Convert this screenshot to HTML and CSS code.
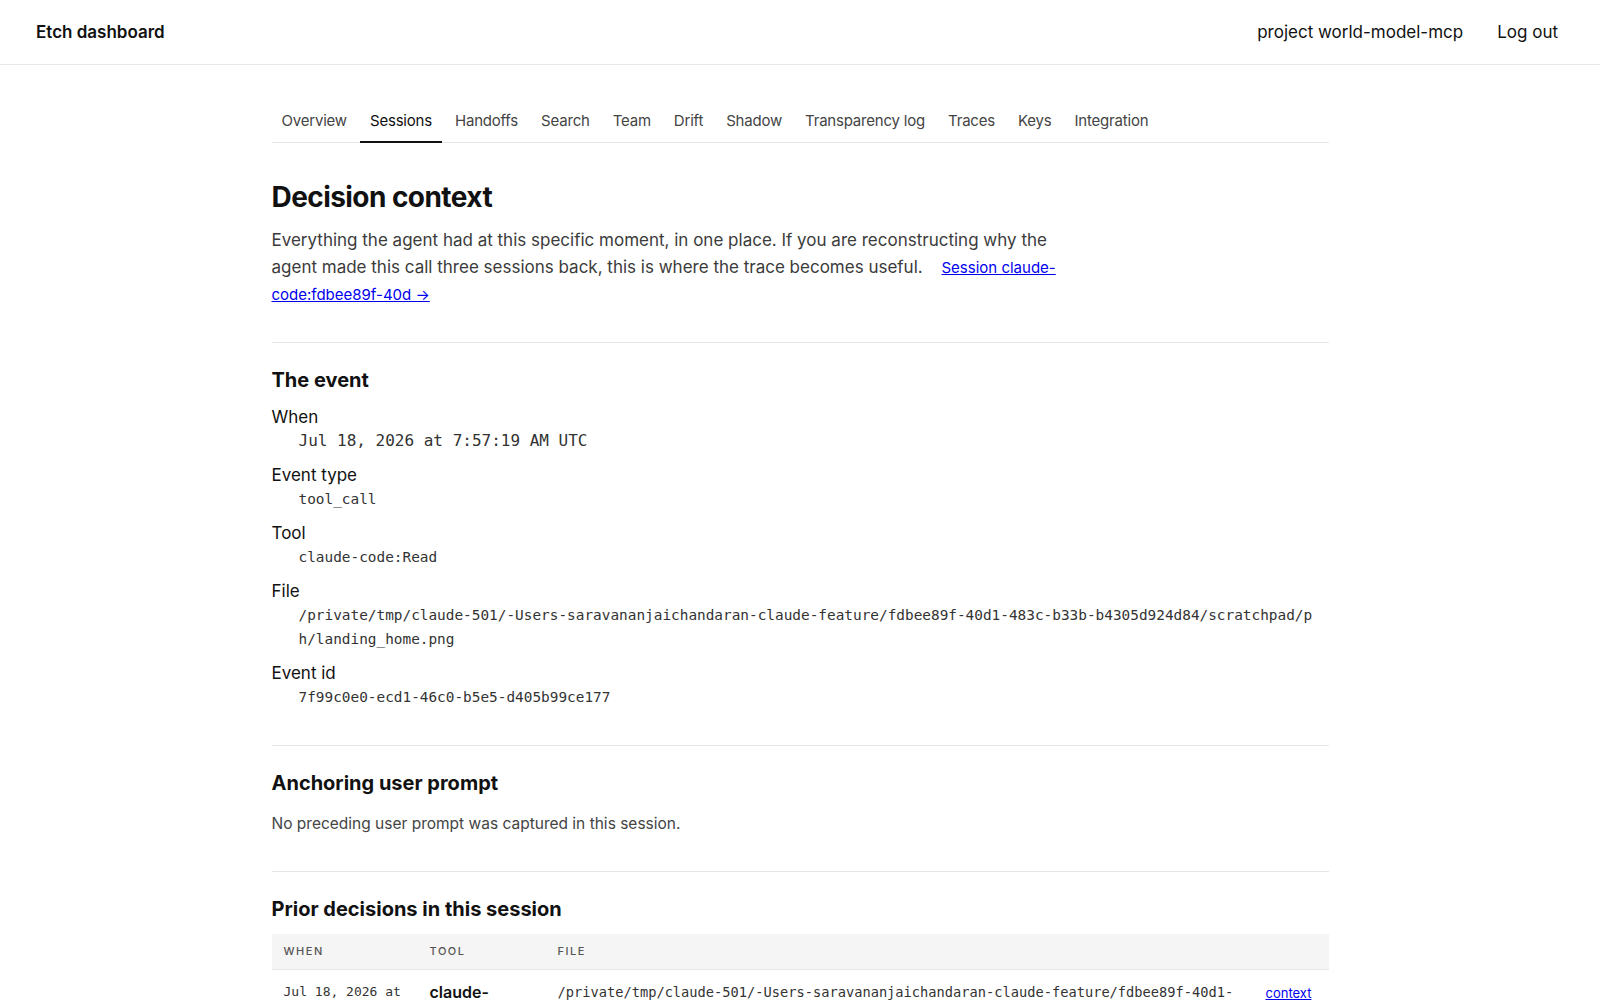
FILE: index.html
```html
<!DOCTYPE html>
<html>
<head>
	<title>Decision context - Etch dashboard</title>
	<link rel="stylesheet" href="styles.css">
</head>
<body>
	<header class="topbar">
		<div class="brand">Etch dashboard</div>
		<nav class="account">
			<span class="project">project world-model-mcp</span>
			<a class="logout" href="#">Log out</a>
		</nav>
	</header>

	<main class="page">
		<nav class="tabs">
			<a href="#">Overview</a>
			<a href="#" class="active">Sessions</a>
			<a href="#">Handoffs</a>
			<a href="#">Search</a>
			<a href="#">Team</a>
			<a href="#">Drift</a>
			<a href="#">Shadow</a>
			<a href="#">Transparency log</a>
			<a href="#">Traces</a>
			<a href="#">Keys</a>
			<a href="#">Integration</a>
		</nav>

		<section class="intro">
			<h1>Decision context</h1>
			<p>Everything the agent had at this specific moment, in one place. If you are reconstructing why the agent made this call three sessions back, this is where the trace becomes useful. <a class="session-link" href="#">Session claude-code:fdbee89f-40d &rarr;</a></p>
		</section>

		<section class="block">
			<h2>The event</h2>
			<dl class="facts">
				<dt>When</dt>
				<dd class="big">Jul 18, 2026 at 7:57:19 AM UTC</dd>
				<dt>Event type</dt>
				<dd>tool_call</dd>
				<dt>Tool</dt>
				<dd>claude-code:Read</dd>
				<dt>File</dt>
				<dd>/private/tmp/claude-501/-Users-saravananjaichandaran-claude-feature/fdbee89f-40d1-483c-b33b-b4305d924d84/scratchpad/ph/landing_home.png</dd>
				<dt>Event id</dt>
				<dd>7f99c0e0-ecd1-46c0-b5e5-d405b99ce177</dd>
			</dl>
		</section>

		<section class="block">
			<h2>Anchoring user prompt</h2>
			<p class="muted">No preceding user prompt was captured in this session.</p>
		</section>

		<section class="block">
			<h2>Prior decisions in this session</h2>
			<table class="decisions">
				<colgroup>
					<col class="col-when">
					<col class="col-tool">
					<col>
					<col class="col-link">
				</colgroup>
				<thead>
					<tr>
						<th>When</th>
						<th>Tool</th>
						<th>File</th>
						<th></th>
					</tr>
				</thead>
				<tbody>
					<tr>
						<td class="when">Jul 18, 2026 at 7:56:48 AM</td>
						<td class="tool">claude-code:Read</td>
						<td class="file">/private/tmp/claude-501/-Users-saravananjaichandaran-claude-feature/fdbee89f-40d1-483c-b33b-b4305d924d84/scratchpad/ph/landing_about.png</td>
						<td class="ctx"><a href="#">context</a></td>
					</tr>
					<tr>
						<td class="when">Jul 18, 2026 at 7:56:12 AM</td>
						<td class="tool">claude-code:Edit</td>
						<td class="file">/private/tmp/claude-501/-Users-saravananjaichandaran-claude-feature/fdbee89f-40d1-483c-b33b-b4305d924d84/scratchpad/ph/index.html</td>
						<td class="ctx"><a href="#">context</a></td>
					</tr>
				</tbody>
			</table>
		</section>
	</main>
</body>
</html>
```

FILE: styles.css
```css
body {
	margin: 0;
	font-family: Inter, "Noto Sans", sans-serif;
	color: #111;
	background: #fff;
}

/* barra do topo */
.topbar {
	height: 65px;
	box-sizing: border-box;
	display: flex;
	align-items: center;
	justify-content: space-between;
	padding: 0 36px;
	border-bottom: 1px solid #e8e8e8;
}
.brand {
	font-size: 17px;
	font-weight: 600;
}
.account {
	display: flex;
	align-items: center;
	gap: 28px;
	font-size: 17px;
}
.logout {
	color: #111;
	text-decoration: none;
	padding: 4px 6px;
}

/* conteudo */
.page {
	max-width: 1057px;
	margin: 0 auto;
	padding-bottom: 48px;
}

.tabs {
	display: flex;
	gap: 3px;
	margin-top: 35px;
	border-bottom: 1px solid #e6e6e6;
}
.tabs a {
	padding: 10px 10px 9px;
	font-size: 15px;
	line-height: 22px;
	letter-spacing: -0.2px;
	color: #444;
	text-decoration: none;
	border-bottom: 2px solid transparent;
	margin-bottom: -1px;
}
.tabs a.active {
	color: #111;
	border-bottom-color: #111;
}

.intro h1 {
	font-size: 28px;
	line-height: 34px;
	font-weight: 700;
	letter-spacing: -0.02em;
	margin: 37px 0 13px;
}
.intro p {
	max-width: 792px;
	font-size: 17px;
	line-height: 26.5px;
	color: #3b3b3b;
	margin: 0 0 33px;
}
.session-link {
	font-size: 15px;
	margin-left: 14px;
	color: #0000ee;
}

.block {
	border-top: 1px solid #e6e6e6;
	padding: 24px 0 26px;
}
.block h2 {
	font-size: 20px;
	line-height: 26px;
	font-weight: 700;
	margin: 0 0 12px;
}
.muted {
	font-size: 15.5px;
	line-height: 24px;
	color: #444;
	margin: 16px 0 9px;
}

.facts {
	margin: 0;
}
.facts dt {
	font-size: 17px;
	line-height: 24px;
}
.facts dd {
	margin: 0 12px 10px 27px;
	font-family: "DejaVu Sans Mono", "Liberation Mono", monospace;
	font-size: 14.4px;
	line-height: 24px;
	color: #333;
	word-break: break-all;
}
.facts dd.big {
	font-size: 16px;
}

/* tabela de decisoes */
.decisions {
	width: 100%;
	border-collapse: collapse;
	table-layout: fixed;
}
.col-when {
	width: 146px;
}
.col-tool {
	width: 128px;
}
.col-link {
	width: 75px;
}
.decisions th {
	background: #f5f5f5;
	text-align: left;
	font-size: 11px;
	font-weight: 500;
	letter-spacing: 0.14em;
	text-transform: uppercase;
	color: #555;
	line-height: 15px;
	padding: 10px 12px;
	border-bottom: 1px solid #e6e6e6;
}
.decisions td {
	padding: 12px;
	vertical-align: top;
	line-height: 20px;
	border-bottom: 1px solid #eee;
}
.decisions .when {
	font-family: "DejaVu Sans Mono", "Liberation Mono", monospace;
	font-size: 13px;
	color: #333;
}
.decisions .tool {
	font-size: 16px;
	font-weight: 600;
}
.decisions .file {
	font-family: "DejaVu Sans Mono", "Liberation Mono", monospace;
	font-size: 13.7px;
	color: #333;
}
.decisions .ctx a {
	font-size: 13px;
	color: #0000ee;
}
```
